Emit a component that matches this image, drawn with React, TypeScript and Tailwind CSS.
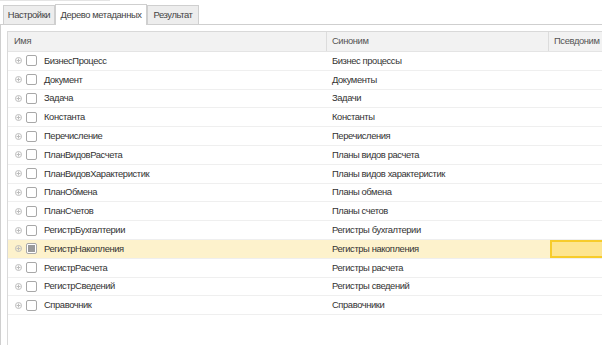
import React from "react";

const rows: [string, string][] = [
  ["БизнесПроцесс", "Бизнес процессы"],
  ["Документ", "Документы"],
  ["Задача", "Задачи"],
  ["Константа", "Константы"],
  ["Перечисление", "Перечисления"],
  ["ПланВидовРасчета", "Планы видов расчета"],
  ["ПланВидовХарактеристик", "Планы видов характеристик"],
  ["ПланОбмена", "Планы обмена"],
  ["ПланСчетов", "Планы счетов"],
  ["РегистрБухгалтерии", "Регистры бухгалтерии"],
  ["РегистрНакопления", "Регистры накопления"],
  ["РегистрРасчета", "Регистры расчета"],
  ["РегистрСведений", "Регистры сведений"],
  ["Справочник", "Справочники"],
];

function Expander() {
  return (
    <svg width="7" height="7" viewBox="0 0 7 7" className="shrink-0">
      <circle cx="3.5" cy="3.5" r="3" fill="none" stroke="#bdbdbd" strokeWidth="1" />
      <path d="M1.5 3.5h4M3.5 1.5v4" stroke="#bdbdbd" strokeWidth="1" />
    </svg>
  );
}

export default function App() {
  return (
    <div
      className="w-[602px] h-[345px] bg-white overflow-hidden relative text-[9.4px] tracking-[-0.4px] text-[#333]"
      style={{ fontFamily: '"Liberation Sans", Arial, sans-serif' }}
    >
      <div className="h-px w-[110px] bg-[#e4e4e4]" />
      <div className="flex items-end h-[23px] pl-[3px] pt-[2px]">
        <div className="h-[19px] w-[52px] flex items-center justify-center bg-[#ededed] border border-[#cfcfcf] border-b-0 text-[#444]">
          Настройки
        </div>
        <div className="h-[21px] w-[92px] flex items-center justify-center bg-white border border-[#cfcfcf] border-b-0 -mb-px relative z-10 text-[#444]">
          Дерево метаданных
        </div>
        <div className="h-[19px] w-[52px] flex items-center justify-center bg-[#ededed] border border-[#cfcfcf] border-b-0 text-[#444]">
          Результат
        </div>
      </div>
      <div className="border-t border-l border-[#cfcfcf] h-[322px] pl-[6px] pt-[6px]">
        <div className="border-l border-t border-[#d9d9d9] h-full">
          <div className="flex h-[20px] bg-[#f2f2f2] border-b border-[#e4e4e4] text-[#555]">
            <div className="w-[319px] shrink-0 pl-[6px] flex items-center border-r border-[#dcdcdc]">Имя</div>
            <div className="w-[222px] shrink-0 pl-[5px] flex items-center border-r border-[#dcdcdc]">Синоним</div>
            <div className="flex-1 pl-[5px] flex items-center whitespace-nowrap">Псевдоним</div>
          </div>
          {rows.map(([name, syn], i) => {
            const sel = i === 10;
            return (
              <div
                key={name}
                className={`flex h-[18.8px] border-b border-[#efefef] ${sel ? "bg-[#fdf2cc]" : "bg-white"}`}
              >
                <div className="w-[319px] shrink-0 pl-[7px] flex items-center">
                  <Expander />
                  <div className="ml-[4px] w-[11px] h-[11px] border border-[#a8a8a8] rounded-[2px] bg-white flex items-center justify-center shrink-0">
                    {sel && <div className="w-[7px] h-[7px] bg-[#9a9a9a]" />}
                  </div>
                  <span className="ml-[7px]">{name}</span>
                </div>
                <div className="w-[223px] shrink-0 pl-[5px] flex items-center">{syn}</div>
                <div className="flex-1 flex items-center">
                  {sel && <div className="w-full h-[18px] bg-[#fde590] border-2 border-[#f7cc2a] border-r-0" />}
                </div>
              </div>
            );
          })}
        </div>
      </div>
    </div>
  );
}
